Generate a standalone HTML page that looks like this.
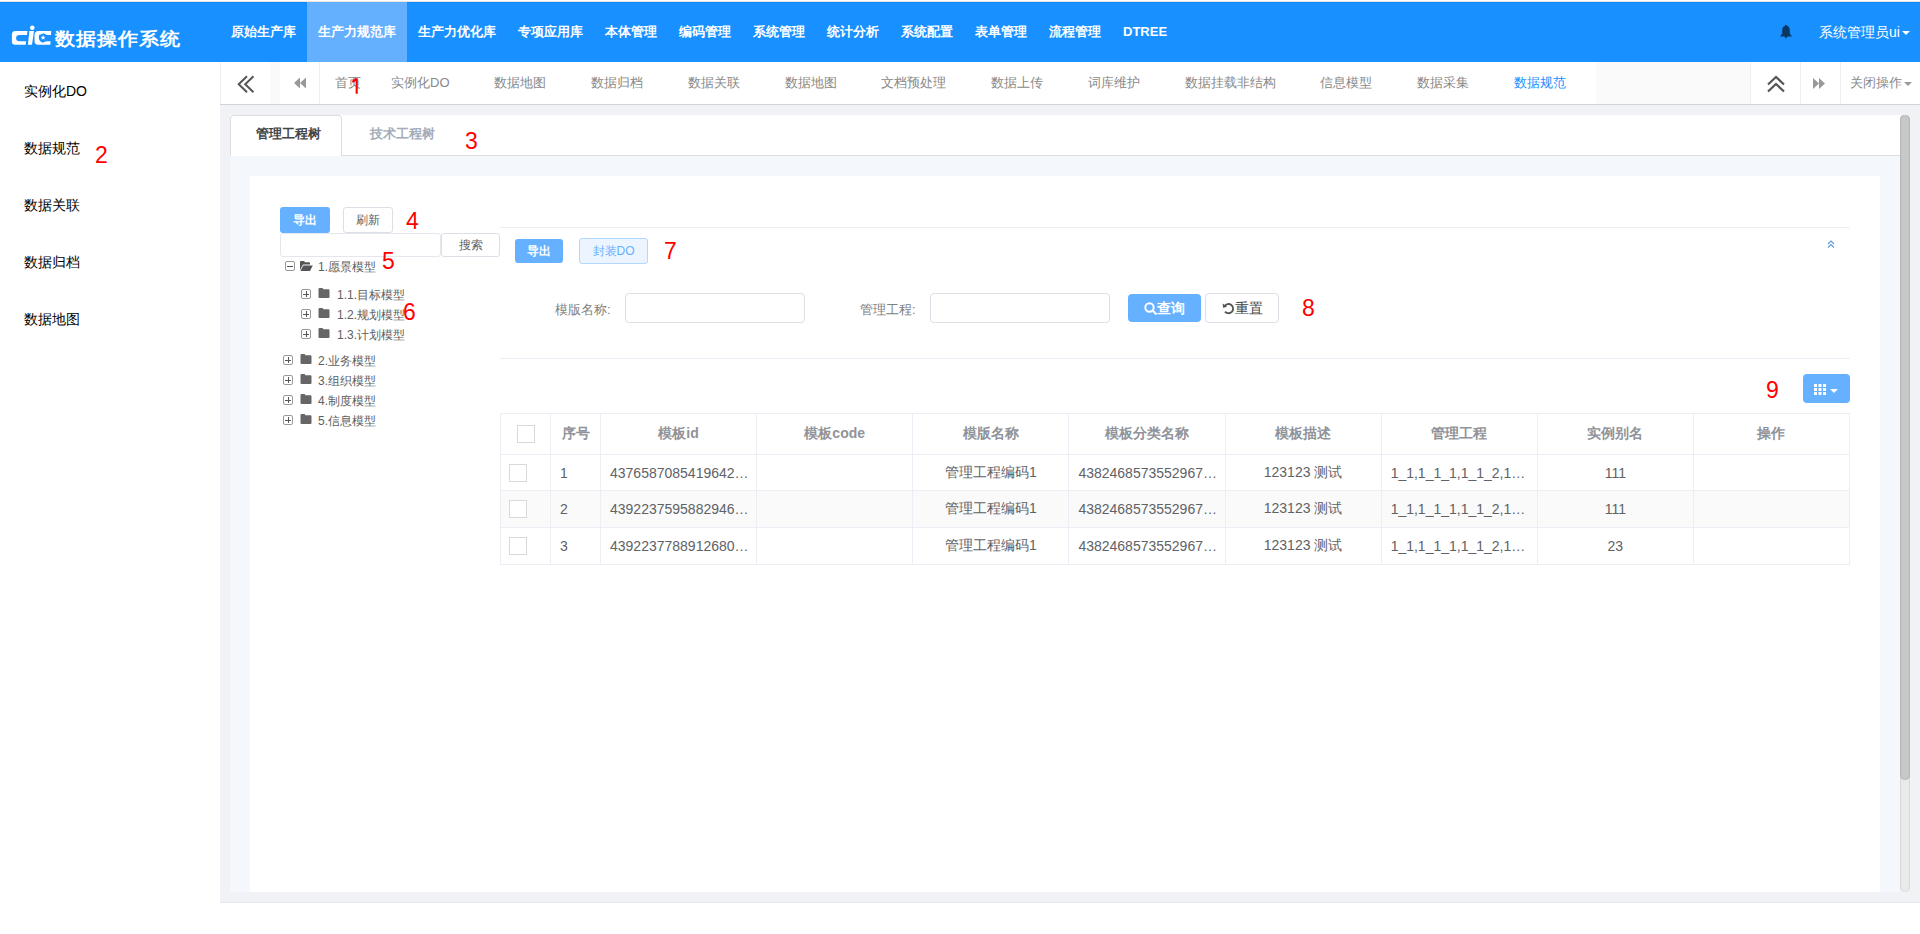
<!DOCTYPE html>
<html><head><meta charset="utf-8">
<style>
*{box-sizing:border-box;margin:0;padding:0}
html,body{width:1920px;height:934px;overflow:hidden;background:#fff;font-family:"Liberation Sans",sans-serif}
.abs{position:absolute}
#hdr{position:absolute;left:0;top:2px;width:1920px;height:60px;background:#1890ff}
.nav{position:absolute;top:0;height:60px;line-height:60px;color:#fff;font-size:13px;font-weight:bold;white-space:nowrap}
.nav.act{background:#64b0ff}
#side{position:absolute;left:0;top:62px;width:220px;height:872px;background:#fff}
.si{position:absolute;left:24px;font-size:14px;color:#000;line-height:20px;white-space:nowrap}
#main{position:absolute;left:220px;top:62px;width:1700px;height:841px;background:#f0f2f5;border-bottom:1px solid #e4e6ea}
#tabbar{position:absolute;left:0;top:0;width:1700px;height:43px;background:#fff;border-bottom:1px solid #d4d4d4}
.tb{position:absolute;top:0;height:42px;line-height:41px;font-size:13px;color:#888;white-space:nowrap}
.red{position:absolute;color:#f00;font-size:23px;line-height:30px;font-family:"Liberation Sans",sans-serif}

.btn{position:absolute;font-size:12px;text-align:center;border-radius:3px;white-space:nowrap}
.bp{background:#66b1ff;color:#fff;font-weight:bold}
.bd{background:#fff;border:1px solid #dcdfe6;color:#606266}
.tr{position:absolute;font-size:12px;color:#606060;line-height:16px;white-space:nowrap}
.pm{position:absolute;width:10px;height:10px;border:1px solid #999;border-radius:2px;background:#fff}
.pm:before{content:"";position:absolute;left:1px;top:3.5px;width:6px;height:1px;background:#555}
.pm.plus:after{content:"";position:absolute;left:3.5px;top:1px;width:1px;height:6px;background:#555}
.fd{position:absolute}
.lbl{position:absolute;font-size:13px;color:#808080;line-height:20px;white-space:nowrap}
.inp{position:absolute;border:1px solid #dcdfe6;border-radius:4px;background:#fff}
table.g{position:absolute;left:500px;top:413px;border-collapse:collapse;table-layout:fixed;width:1350px}
table.g td,table.g th{border:1px solid #ebeef5;font-size:14px;color:#606266;white-space:nowrap;overflow:hidden}
table.g th{height:41px;font-weight:bold;color:#909399;text-align:center}
table.g td{text-align:center}
.cb{display:inline-block;width:18px;height:18px;border:1px solid #d9d9d9;background:#fff;vertical-align:middle}
</style></head><body>
<div class="abs" style="left:0;top:1px;width:1920px;height:1px;background:#ebe5e1"></div>
<div id="hdr">
  <div class="abs" style="left:0;top:0;width:1920px;height:1px;background:#0c8afe"></div>
  <svg class="abs" style="left:0;top:-2px" width="60" height="50" viewBox="0 0 60 50">
    <path d="M15 31 H27.5 L27 35 H19.5 Q16.1 35 16.1 38 Q16.1 41.2 19.5 41.2 H26.1 L25.7 44.8 H15 Q11.9 44.8 11.9 41.5 V34.5 Q12.2 31 15 31 Z" fill="#fff"/>
    <circle cx="32.3" cy="27.8" r="2.3" fill="#fff"/>
    <path d="M29.4 31 H34 L32 44.8 H27.9 Z" fill="#fff"/>
    <path d="M38.5 31 H51.2 L50.3 44.8 H38.2 Q34.5 44.8 34.5 41 V35 Q34.8 31 38.5 31 Z" fill="#fff"/>
    <path d="M51.5 35 H47.8 Q45.8 35 43.7 33.2 Q41.6 34.6 38.9 34.9 V38.3 Q39.2 41.6 43 42.8 Q44.6 41.2 46.8 41.2 H51 Z" fill="#1890ff"/>
    <path d="M43.1 35.1 L43.8 36.8 L45.5 36.9 L44.2 38 L44.6 39.7 L43.1 38.8 L41.6 39.7 L42 38 L40.7 36.9 L42.4 36.8 Z" fill="#fff"/>
  </svg>
  <div class="abs" style="left:55px;top:23px;color:#fff;font-size:20px;font-weight:900;line-height:30px;letter-spacing:1.1px;white-space:nowrap;transform-origin:0 0;transform:scaleY(0.9)">数据操作系统</div>
  <div class="nav" style="left:220px;width:87px;padding-left:11px">原始生产库</div>
  <div class="nav act" style="left:307px;width:100px;padding-left:11px">生产力规范库</div>
  <div class="nav" style="left:407px;width:100px;padding-left:11px">生产力优化库</div>
  <div class="nav" style="left:507px;width:87px;padding-left:11px">专项应用库</div>
  <div class="nav" style="left:594px;padding-left:11px">本体管理</div>
  <div class="nav" style="left:668px;padding-left:11px">编码管理</div>
  <div class="nav" style="left:742px;padding-left:11px">系统管理</div>
  <div class="nav" style="left:816px;padding-left:11px">统计分析</div>
  <div class="nav" style="left:890px;padding-left:11px">系统配置</div>
  <div class="nav" style="left:964px;padding-left:11px">表单管理</div>
  <div class="nav" style="left:1038px;padding-left:11px">流程管理</div>
  <div class="nav" style="left:1112px;padding-left:11px">DTREE</div>
  <svg class="abs" style="left:1779px;top:21px" width="14" height="16" viewBox="0 0 14 16"><path d="M7 1.8 Q7.8 1.8 7.9 2.8 Q10.6 3.6 10.8 7 V10 Q11 11.6 13.3 13.6 H0.7 Q3 11.6 3.2 10 V7 Q3.4 3.6 6.1 2.8 Q6.2 1.8 7 1.8 Z M5.4 13.6 H8.6 L7 15.6 Z" fill="#0b3863"/></svg>
  <div class="nav" style="left:1819px;font-weight:normal;font-size:14px">系统管理员ui</div>
  <svg class="abs" style="left:1902px;top:29px" width="8" height="4" viewBox="0 0 8 4"><path d="M0 0 H8 L4 4 Z" fill="#fff"/></svg>
</div>
<div id="side">
  <div class="si" style="top:19px">实例化DO</div>
  <div class="si" style="top:76px">数据规范</div>
  <div class="si" style="top:133px">数据关联</div>
  <div class="si" style="top:190px">数据归档</div>
  <div class="si" style="top:247px">数据地图</div>
</div>
<div id="main">
  <div id="tabbar">
    <div class="abs" style="left:0;top:0;width:1px;height:42px;background:#eee"></div>
    <div class="abs" style="left:0;top:0;width:50px;height:42px">
      <svg class="abs" style="left:16px;top:13px" width="20" height="19" viewBox="0 0 20 19"><path d="M11 1.3 L2.7 9.3 L11 17.3 M17.5 1.3 L9.2 9.3 L17.5 17.3" fill="none" stroke="#555" stroke-width="2"/></svg>
    </div>
    <div class="abs" style="left:50px;top:0;width:10px;height:42px;background:#fafafa"></div>
    <div class="abs" style="left:60px;top:0;width:40px;height:42px;border-right:1px solid #eee">
      <svg class="abs" style="left:14px;top:15px" width="13" height="12" viewBox="0 0 13 12"><path d="M0 6 L6 0.5 V11.5 Z M6 6 L12 0.5 V11.5 Z" fill="#999"/></svg>
    </div>
    <div class="tb" style="left:115px">首页</div>
    <div class="tb" style="left:171px">实例化DO</div>
    <div class="tb" style="left:274px">数据地图</div>
    <div class="tb" style="left:371px">数据归档</div>
    <div class="tb" style="left:468px">数据关联</div>
    <div class="tb" style="left:565px">数据地图</div>
    <div class="tb" style="left:661px">文档预处理</div>
    <div class="tb" style="left:771px">数据上传</div>
    <div class="tb" style="left:868px">词库维护</div>
    <div class="tb" style="left:965px">数据挂载非结构</div>
    <div class="tb" style="left:1100px">信息模型</div>
    <div class="tb" style="left:1197px">数据采集</div>
    <div class="tb" style="left:1294px;color:#1890ff">数据规范</div>
    <div class="abs" style="left:1376px;top:0;width:154px;height:42px;background:#fafafa"></div>
    <div class="abs" style="left:1530px;top:0;width:51px;height:42px;border-left:1px solid #eee;border-right:1px solid #eee">
      <svg class="abs" style="left:15px;top:13px" width="20" height="18" viewBox="0 0 20 18"><path d="M2 9.5 L10 2 L18 9.5 M2 16.5 L10 9 L18 16.5" fill="none" stroke="#555" stroke-width="2.2"/></svg>
    </div>
    <div class="abs" style="left:1581px;top:0;width:40px;height:42px;border-right:1px solid #eee">
      <svg class="abs" style="left:12px;top:16px" width="13" height="12" viewBox="0 0 13 12"><path d="M12 5.5 L6 0 V11 Z M6 5.5 L0 0 V11 Z" fill="#999"/></svg>
    </div>
    <div class="tb" style="left:1630px">关闭操作<span style="display:inline-block;width:0;height:0;border-left:4px solid transparent;border-right:4px solid transparent;border-top:4px solid #999;margin-left:2px;vertical-align:middle"></span></div>
  </div>
  <!-- content wrapper -->
  <div id="wrap" class="abs" style="left:10px;top:53px;width:1670px;height:777px;background:#f4f8fd">
    <div class="abs" style="left:0;top:0;width:1670px;height:41px;background:#fff;border-bottom:1px solid #ddd"></div>
    <div class="abs" style="left:0;top:0;width:112px;height:41px;background:#fff;border:1px solid #ddd;border-bottom:none;border-radius:4px 4px 0 0;height:41px"></div>
    <div class="abs" style="left:26px;top:9px;font-size:13px;font-weight:bold;color:#444;line-height:20px">管理工程树</div>
    <div class="abs" style="left:140px;top:9px;font-size:13px;font-weight:bold;color:#a3acb9;line-height:20px">技术工程树</div>
    <div id="panel" class="abs" style="left:20px;top:61px;width:1630px;height:716px;background:#fff"></div>
  </div>
  <!-- scrollbar -->
  <div class="abs" style="left:1680px;top:53px;width:10px;height:777px;border-radius:5px;background:#eaeaea;box-shadow:inset 1px 0 1px #d6d6d6,inset -1px 0 1px #d6d6d6"></div>
  <div class="abs" style="left:1680px;top:53px;width:10px;height:665px;border-radius:5px;background:#c8c8c8;box-shadow:inset 1px 0 1px #b4b4b4,inset -1px 0 1px #b4b4b4"></div>
</div>
<div id="content">
  <div class="btn bp" style="left:280px;top:207px;width:50px;height:26px;line-height:26px">导出</div>
  <div class="btn bd" style="left:343px;top:207px;width:50px;height:26px;line-height:24px">刷新</div>
  <div class="inp" style="left:280px;top:233px;width:161px;height:24px;border-color:#e4e7ed;border-radius:3px"></div>
  <div class="btn bd" style="left:441px;top:233px;width:59px;height:24px;line-height:22px">搜索</div>
  <div class="abs" style="left:500px;top:227px;width:1350px;height:1px;background:#ebeef5"></div>
  <!-- tree -->
  <div class="pm" style="left:285px;top:261px"></div>
  <svg class="fd" style="left:300px;top:261px" width="13" height="10" viewBox="0 0 13 10"><path d="M0 1 Q0 0 1 0 H4 L5 1.2 H9 Q10 1.2 10 2.2 V3.5 H3 L0 9 Z M3.3 4.4 H12.8 L10 10 H0.4 Z" fill="#555"/></svg>
  <div class="tr" style="left:318px;top:259px">1.愿景模型</div>
  <div class="pm plus" style="left:301px;top:289px"></div>
  <svg class="fd" style="left:318px;top:288px" width="12" height="10" viewBox="0 0 12 10"><path d="M0.5 1 Q0.5 0 1.5 0 H4.5 L5.5 1.2 H10.5 Q11.5 1.2 11.5 2.2 V9 Q11.5 10 10.5 10 H1.5 Q0.5 10 0.5 9 Z" fill="#666"/></svg>
  <div class="tr" style="left:337px;top:287px">1.1.目标模型</div>
  <div class="pm plus" style="left:301px;top:309px"></div>
  <svg class="fd" style="left:318px;top:308px" width="12" height="10" viewBox="0 0 12 10"><path d="M0.5 1 Q0.5 0 1.5 0 H4.5 L5.5 1.2 H10.5 Q11.5 1.2 11.5 2.2 V9 Q11.5 10 10.5 10 H1.5 Q0.5 10 0.5 9 Z" fill="#666"/></svg>
  <div class="tr" style="left:337px;top:307px">1.2.规划模型</div>
  <div class="pm plus" style="left:301px;top:329px"></div>
  <svg class="fd" style="left:318px;top:328px" width="12" height="10" viewBox="0 0 12 10"><path d="M0.5 1 Q0.5 0 1.5 0 H4.5 L5.5 1.2 H10.5 Q11.5 1.2 11.5 2.2 V9 Q11.5 10 10.5 10 H1.5 Q0.5 10 0.5 9 Z" fill="#666"/></svg>
  <div class="tr" style="left:337px;top:327px">1.3.计划模型</div>
  <div class="pm plus" style="left:283px;top:355px"></div>
  <svg class="fd" style="left:300px;top:354px" width="12" height="10" viewBox="0 0 12 10"><path d="M0.5 1 Q0.5 0 1.5 0 H4.5 L5.5 1.2 H10.5 Q11.5 1.2 11.5 2.2 V9 Q11.5 10 10.5 10 H1.5 Q0.5 10 0.5 9 Z" fill="#666"/></svg>
  <div class="tr" style="left:318px;top:353px">2.业务模型</div>
  <div class="pm plus" style="left:283px;top:375px"></div>
  <svg class="fd" style="left:300px;top:374px" width="12" height="10" viewBox="0 0 12 10"><path d="M0.5 1 Q0.5 0 1.5 0 H4.5 L5.5 1.2 H10.5 Q11.5 1.2 11.5 2.2 V9 Q11.5 10 10.5 10 H1.5 Q0.5 10 0.5 9 Z" fill="#666"/></svg>
  <div class="tr" style="left:318px;top:373px">3.组织模型</div>
  <div class="pm plus" style="left:283px;top:395px"></div>
  <svg class="fd" style="left:300px;top:394px" width="12" height="10" viewBox="0 0 12 10"><path d="M0.5 1 Q0.5 0 1.5 0 H4.5 L5.5 1.2 H10.5 Q11.5 1.2 11.5 2.2 V9 Q11.5 10 10.5 10 H1.5 Q0.5 10 0.5 9 Z" fill="#666"/></svg>
  <div class="tr" style="left:318px;top:393px">4.制度模型</div>
  <div class="pm plus" style="left:283px;top:415px"></div>
  <svg class="fd" style="left:300px;top:414px" width="12" height="10" viewBox="0 0 12 10"><path d="M0.5 1 Q0.5 0 1.5 0 H4.5 L5.5 1.2 H10.5 Q11.5 1.2 11.5 2.2 V9 Q11.5 10 10.5 10 H1.5 Q0.5 10 0.5 9 Z" fill="#666"/></svg>
  <div class="tr" style="left:318px;top:413px">5.信息模型</div>

  <div class="btn bp" style="left:515px;top:239px;width:48px;height:24px;line-height:24px">导出</div>
  <div class="btn" style="left:579px;top:238px;width:69px;height:26px;line-height:24px;background:#ecf5ff;border:1px solid #b3d8ff;color:#66b1ff">封装DO</div>
  <svg class="abs" style="left:1827px;top:240px" width="8" height="8" viewBox="0 0 8 8"><path d="M1 4 L4 1 L7 4 M1 7.5 L4 4.5 L7 7.5" fill="none" stroke="#5e9cd8" stroke-width="1.2"/></svg>
  <div class="lbl" style="left:555px;top:300px">模版名称:</div>
  <div class="inp" style="left:625px;top:293px;width:180px;height:30px"></div>
  <div class="lbl" style="left:860px;top:300px">管理工程:</div>
  <div class="inp" style="left:930px;top:293px;width:180px;height:30px"></div>
  <div class="btn bp" style="left:1128px;top:294px;width:73px;height:28px;line-height:28px;font-size:14px;font-weight:bold;border-radius:4px">
    <svg style="vertical-align:-2px" width="13" height="13" viewBox="0 0 13 13"><circle cx="5.5" cy="5.5" r="4.2" fill="none" stroke="#fff" stroke-width="2"/><path d="M8.5 8.5 L11.8 11.8" stroke="#fff" stroke-width="2.2" stroke-linecap="round"/></svg>查询</div>
  <div class="btn bd" style="left:1205px;top:293px;width:74px;height:30px;line-height:28px;font-size:14px;color:#444;border-radius:4px">
    <svg style="vertical-align:-2px" width="13" height="13" viewBox="0 0 13 13"><path d="M2.6 4.2 A4.6 4.6 0 1 1 3 9.6" fill="none" stroke="#555" stroke-width="1.8"/><path d="M0.5 1.5 L1.2 6 L5.2 4.4 Z" fill="#555"/></svg>重置</div>
  <div class="abs" style="left:500px;top:358px;width:1350px;height:1px;background:#ebeef5"></div>
  <div class="btn bp" style="left:1803px;top:374px;width:47px;height:29px;border-radius:4px">
    <svg class="abs" style="left:11px;top:10px" width="12" height="11" viewBox="0 0 12 11"><path d="M0 0h3v3h-3z M4.5 0h3v3h-3z M9 0h3v3h-3z M0 4h3v3h-3z M4.5 4h3v3h-3z M9 4h3v3h-3z M0 8h3v3h-3z M4.5 8h3v3h-3z M9 8h3v3h-3z" fill="#fff"/></svg>
    <svg class="abs" style="left:27px;top:15px" width="8" height="4" viewBox="0 0 8 4"><path d="M0 0 H8 L4 4 Z" fill="#fff"/></svg>
  </div>
  <table class="g">
    <colgroup><col style="width:50px"><col style="width:50px"><col><col><col><col><col><col><col><col></colgroup>
    <tr><th><span class="cb"></span></th><th>序号</th><th>模板id</th><th>模板code</th><th>模版名称</th><th>模板分类名称</th><th>模板描述</th><th>管理工程</th><th>实例别名</th><th>操作</th></tr>
    <tr style="height:36px;background:#fff"><td style="text-align:left;padding-left:8px"><span class="cb"></span></td><td style="text-align:left;padding-left:9px">1</td><td style="text-align:left;padding-left:9px">4376587085419642…</td><td></td><td>管理工程编码1</td><td style="text-align:left;padding-left:9px">4382468573552967…</td><td>123123 测试</td><td style="text-align:left;padding-left:9px">1_1,1_1_1,1_1_2,1…</td><td>111</td><td></td></tr>
    <tr style="height:37px;background:#fafafa"><td style="text-align:left;padding-left:8px"><span class="cb"></span></td><td style="text-align:left;padding-left:9px">2</td><td style="text-align:left;padding-left:9px">4392237595882946…</td><td></td><td>管理工程编码1</td><td style="text-align:left;padding-left:9px">4382468573552967…</td><td>123123 测试</td><td style="text-align:left;padding-left:9px">1_1,1_1_1,1_1_2,1…</td><td>111</td><td></td></tr>
    <tr style="height:37px;background:#fff"><td style="text-align:left;padding-left:8px"><span class="cb"></span></td><td style="text-align:left;padding-left:9px">3</td><td style="text-align:left;padding-left:9px">4392237788912680…</td><td></td><td>管理工程编码1</td><td style="text-align:left;padding-left:9px">4382468573552967…</td><td>123123 测试</td><td style="text-align:left;padding-left:9px">1_1,1_1_1,1_1_2,1…</td><td>23</td><td></td></tr>
  </table>
</div>
<svg class="abs" style="left:350px;top:76px" width="10" height="20" viewBox="0 0 10 20"><path d="M6.7 2.2 V17.8 M2.4 6 Q5 4.6 6.4 2.4" fill="none" stroke="#f00" stroke-width="2.1"/></svg>
<div class="red" style="left:95px;top:140px">2</div>
<div class="red" style="left:465px;top:126px">3</div>
<div class="red" style="left:406px;top:206px">4</div>
<div class="red" style="left:382px;top:246px">5</div>
<div class="red" style="left:403px;top:297px">6</div>
<div class="red" style="left:664px;top:236px">7</div>
<div class="red" style="left:1302px;top:293px">8</div>
<div class="red" style="left:1766px;top:375px">9</div>
</body></html>
